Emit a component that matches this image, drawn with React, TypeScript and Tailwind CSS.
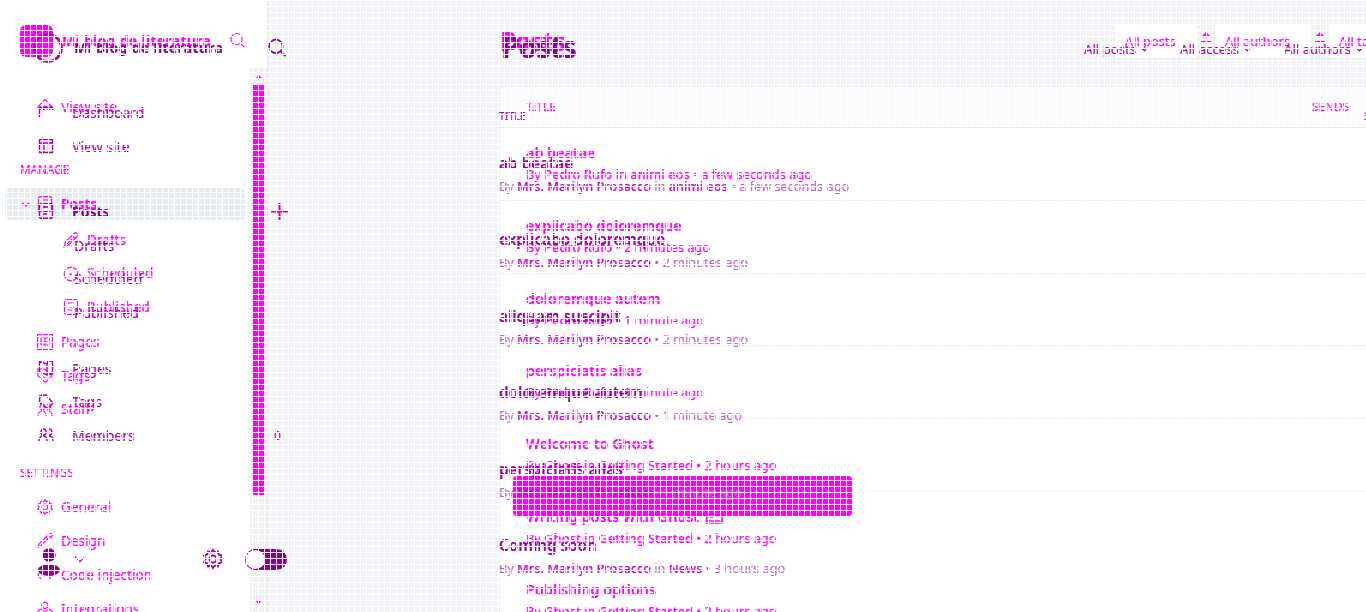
import type { ReactNode } from "react";

type IconName =
  | "home" | "dash" | "layout" | "doc" | "pen" | "clock" | "page" | "tag" | "label" | "users"
  | "gear" | "tool" | "code" | "nodes" | "search" | "chevron" | "plus" | "book";

const paths: Record<IconName, ReactNode> = {
  home: <path d="M.5 8.500 8 .5l7.500 8M3.500 7v4M6 11V9c0-2.500 4-2.500 4 0v2M13 7v4" />,
  dash: <path d="M1.500 13V3.500h13V6M6 3.500V6M10.500 3.500V6" />,
  layout: <path d="M1.500 1.500h13v13h-13zM1.500 5h13M6 5.500v9M10.500 5.500v9" />,
  doc: <path d="M3 .7h10a1.500 1.500 0 0 1 1.500 1.500v11.600a1.500 1.500 0 0 1-1.500 1.500H3a1.500 1.500 0 0 1-1.500-1.500V2.200A1.500 1.500 0 0 1 3 .7zM5 4h6M6 8h5M5 11h4" />,
  pen: <path d="M1 15l1.500-5L11 1.500a2 2 0 0 1 3 3L5.500 13zM9 3.500l3 3M4 12l6-6" />,
  clock: <><circle cx="8" cy="8" r="6.800" /><path d="M6.500 7.500l1.500 1 1.500-1" /></>,
  page: <path d="M.6 .6h14.800v14.800H.6zM4 4h8M4 8h8M4 11h8M4 4v7M8 4v7M12 4v7" />,
  tag: <path d="M1 1h7l7 7-6.500 6.500L1 8zM4 4.500h1M5 8l4 3" />,
  label: <path d="M2 1.500 8 1l7 8-5 5.500L5 12 1.500 8zM4 4h1" />,
  users: <path d="M1 14c0-4 2-5 4.500-5S9 11 9 14M11 9c3 0 4 2 4 5M8 5a2.500 3 0 1 1-5 0 2.500 3 0 0 1 5 0zM10 2.500a2.500 3 0 1 1 0 5" />,
  gear: (
    <>
      <circle cx="8" cy="8" r="2.800" />
      <path d="M8 .7l1.500 2 2.400-.8.700 2.500 2.500.9L14 8l1.200 2.600-2.500.9-.8 2.500-2.400-.8-1.500 2-1.500-2-2.400.8-.8-2.500-2.500-.9L2 8 .8 5.300l2.500-.9.800-2.500 2.400.8z" />
    </>
  ),
  tool: <path d="M1 15l1-4 8-8M3.500 13l8-8M9 4l3 3M11 2l3-1.500L15.500 2 14 5z" />,
  code: <path d="M4 4 1 8l3 4M12 4l3 4-3 4" />,
  nodes: <path d="M8 1l3 2v3L8 8 5 6V3zM4 8l3 2v3l-3 2-3-2v-3zM12 8l3 2v3l-3 2-3-2v-3z" />,
  search: <path d="M13 6.500a6 6 0 1 1-12 0 6 6 0 0 1 12 0zM11.500 11.500l4 3.800" />,
  chevron: <path d="M2 5l6 6 6-6" />,
  plus: <path d="M8 0v16M0 8h16" />,
  book: <path d="M1.500 1.500 9 4v11L1.500 12zM9 4l1-3h4.500v13H9" />,
};

function Icon({ name, className, width = 1.2 }: { name: IconName; className: string; width?: number }) {
  return (
    <svg viewBox="0 0 16 16" className={`shrink-0 overflow-visible ${className}`} fill="none" stroke="currentColor" strokeWidth={width}>
      {paths[name]}
    </svg>
  );
}

type Nav = { label: string; row: string; icon?: IconName; text?: string; head?: boolean; extra?: ReactNode };

const oldNav: Nav[] = [
  { label: "View site", row: "h-[34px] pl-[37px]", icon: "home" },
  { label: "MANAGE", row: "mt-[29px] h-[34px] pl-5", head: true },
  { label: "Posts", row: "h-[34px] pl-[37px]", icon: "doc" },
  { label: "Drafts", row: "mt-[2px] h-[34px] pl-[63px]", icon: "pen" },
  { label: "Scheduled", row: "h-[33px] pl-[63px]", icon: "clock" },
  { label: "Published", row: "h-[34px] pl-[63px]", icon: "doc" },
  { label: "Pages", row: "mt-px h-[34px] pl-[37px]", icon: "page" },
  { label: "Tags", row: "h-[34px] pl-[37px]", icon: "tag" },
  { label: "Staff", row: "h-[33px] pl-[37px]", icon: "users" },
  { label: "SETTINGS", row: "mt-[30px] h-[34px] pl-5", head: true },
  { label: "General", row: "h-[34px] pl-[37px]", icon: "gear" },
  { label: "Design", row: "h-[34px] pl-[37px]", icon: "tool" },
  { label: "Code injection", row: "h-[34px] pl-[37px]", icon: "code" },
  { label: "Integrations", row: "h-[34px] pl-[37px]", icon: "nodes" },
];

const newNav: Nav[] = [
  { label: "Dashboard", row: "h-[34px] pl-[38px]", icon: "dash" },
  { label: "View site", row: "h-[34px] pl-[38px]", icon: "layout" },
  { label: "Posts", row: "mt-[31px] h-[34px] pl-[38px]", icon: "doc", text: "font-bold text-[#80008a]", extra: <Icon name="plus" className="size-[17px] text-[#c800c8]" width={1.9} /> },
  { label: "Drafts", row: "mt-px h-[33px] pl-[74px]" },
  { label: "Scheduled", row: "h-[33px] pl-[74px]" },
  { label: "Published", row: "h-[34px] pl-[74px]" },
  { label: "Pages", row: "mt-[22px] h-[34px] pl-[38px]", icon: "book" },
  { label: "Tags", row: "h-[33px] pl-[38px]", icon: "label" },
  { label: "Members", row: "h-[34px] pl-[38px]", icon: "users", extra: <span className="pt-px pl-[3px] text-xs">0</span> },
];

const oldPosts = [
  ["ab beatae", "Pedro Rufo", "animi eos", "a few seconds ago"],
  ["explicabo doloremque", "Pedro Rufo", "", "2 minutes ago"],
  ["doloremque autem", "Pedro Rufo", "", "1 minute ago"],
  ["perspiciatis alias", "Pedro Rufo", "", "1 minute ago"],
  ["Welcome to Ghost", "Ghost", "Getting Started", "2 hours ago"],
  ["Writing posts with Ghost", "Ghost", "Getting Started", "2 hours ago"],
  ["Publishing options", "Ghost", "Getting Started", "2 hours ago"],
];

const newPosts = [
  ["ab beatae", "animi eos", "a few seconds ago"],
  ["explicabo doloremque", "", "2 minutes ago"],
  ["aliquam suscipit", "", "2 minutes ago"],
  ["doloremque autem", "", "1 minute ago"],
  ["perspiciatis alias", "", "1 minute ago"],
  ["Coming soon", "News", "3 hours ago"],
];

function Scrollbar() {
  return (
    <div className="mt-[68px] flex w-[17px] flex-col items-center bg-[#f1f1f1]">
      <svg className="mt-[7px] h-[3px] w-[6px]" viewBox="0 0 6 3"><path d="M0 3 3 0l3 3z" fill="#f0f" /></svg>
      <div className="mt-[7px] h-[410px] w-[11px] bg-[#ff00ff]" />
      <svg className="mt-[106px] h-[3px] w-[7px]" viewBox="0 0 6 3"><path d="M0 0h6L3 3z" fill="#f0f" /></svg>
    </div>
  );
}

function OldPage() {
  return (
    <div className="col-start-1 row-start-1 flex h-[612px] min-w-0 overflow-hidden text-[#ff00ff] [-webkit-text-stroke:0.25px_#ff00ff]">
      <aside className="h-full w-[250px] shrink-0 bg-white">
        <div className="flex h-[90px] items-start pt-[25px] pl-5">
          <div className="h-8 w-[33px] shrink-0 rounded-md bg-[#ff00ff]" />
          <div className="ml-[9px] h-8 w-[168px] text-[14px] leading-[32px] font-bold tracking-[0.3px] whitespace-nowrap">Mi blog de literatura</div>
          <Icon name="search" className="mt-2 size-[15px]" width={1.2} />
        </div>
        <nav>
          {oldNav.map((n) => (
            <div key={n.label} className={`flex items-center ${n.row}`}>
              {n.label === "Posts" ? (
                <div className="-ml-8 flex h-8 w-[240px] shrink-0 items-center rounded-[5px] bg-[#e6ebf0]">
                  <Icon name="chevron" className="ml-4 size-[9px]" width={2.4} />
                  <Icon name="doc" className="ml-[7px] size-4" width={1.2} />
                  <span className="ml-[8px] text-[13.5px] font-bold">Posts</span>
                </div>
              ) : (
                <>
                  {n.icon && <Icon name={n.icon} className="mr-[8px] size-4" width={1.2} />}
                  <span className={n.head ? "text-[11.700px]" : "text-[13.600px] whitespace-nowrap"}>{n.label}</span>
                </>
              )}
            </div>
          ))}
        </nav>
      </aside>
      <Scrollbar />
      <main className="min-w-0 flex-1 bg-[#f2f3f6] pl-[232px] shadow-[inset_1px_0_#e5e9ed]">
        <header className="flex h-[87px] justify-between">
          <h1 className="pt-[23px] pl-[1px] text-[26px] leading-9 font-bold tracking-[-1px]">Posts</h1>
          <div className="mt-6 mr-[-60px] flex h-[34px] text-[12.800px] shadow-xs">
            <Select label="All posts" width="w-[82px]" />
            <Stepper />
            <Select label="All authors" width="w-[96px]" />
            <Stepper />
            <Select label="All tags" width="w-[97px]" />
          </div>
        </header>
        <div className="h-[525px] overflow-hidden rounded-tl-md border-l border-[#e5eff5] bg-white">
          <div className="flex h-[41px] items-center justify-between border-b border-[#e5eaef] bg-[#fafbfd] pr-[17px] pl-[26px] text-[11.800px]">
            <span>TITLE</span><span>SENDS</span>
          </div>
          {oldPosts.map(([title, author, tag, when], i) => (
            <div key={i} className="h-[72.750px] border-b border-[#e5eff5] pt-[13px] pl-[26px] whitespace-nowrap">
              <div className="flex items-center gap-[6px] text-[14.350px] leading-[23px] font-semibold">
                {title}
                {i === 5 && <svg className="mt-px h-[14px] w-[18px]" viewBox="0 0 18 14" fill="none" stroke="currentColor" strokeWidth="1.600"><path d="M2 7l5-5h8l2 4v7H1zM1 11h16M5 7h3M11 6h3" /></svg>}
              </div>
              <div className="text-[12.850px] leading-5">
                By <span className="font-medium">{author}</span>{tag && <> in <span className="font-medium">{tag}</span></>} • {when}
              </div>
            </div>
          ))}
        </div>
      </main>
    </div>
  );
}

function Select({ label, width }: { label: string; width: string }) {
  return <div className={`flex items-center bg-white pt-px pl-[10px] whitespace-nowrap ${width}`}>{label}</div>;
}

function Stepper() {
  return (
    <div className="flex w-[18px] flex-col items-center bg-[#f1f1f1] pt-2">
      <svg className="h-1 w-2" viewBox="0 0 8 4"><path d="M0 4 4 0l4 4z" fill="#f0f" /></svg>
      <div className="mt-[5px] h-px w-[10px] bg-[#ff00ff]" />
    </div>
  );
}

function NewPage() {
  return (
    <div className="relative col-start-1 row-start-1 flex h-[612px] min-w-0 overflow-hidden text-[#a600b0] [-webkit-text-stroke:0.15px_currentColor]">
      <aside className="w-[300px] shrink-0">
        <div className="flex h-[95px] items-start pt-[33px] pl-[33px] text-[#8b0096]">
          <div className="size-[30px] shrink-0 rounded-full border-[3px] border-[#b000b4]" />
          <div className="ml-[11px] w-[194px] text-[14px] leading-[30px] font-bold tracking-[0.3px] whitespace-nowrap">Mi blog de literatura</div>
          <Icon name="search" className="mt-[6px] size-[18px]" width={1.5} />
        </div>
        <nav>
          {newNav.map((n) => (
            <div key={n.label} className={`flex items-center text-[14px] ${n.row}`}>
              {n.icon && <Icon name={n.icon} className="mr-[18px] size-4" width={1.4} />}
              <span className={n.text ?? ""}>{n.label}</span>
              {n.extra && <div className="mr-[13px] ml-auto flex w-4">{n.extra}</div>}
            </div>
          ))}
        </nav>
        <div className="mt-[87px] flex h-10 items-center pl-[38px]">
          <svg className="mt-[6px] h-[28px] w-[22px] shrink-0" viewBox="0 0 22 28" fill="#8b008f"><circle cx="11" cy="7" r="6.700" /><ellipse cx="11" cy="22" rx="11" ry="6" /></svg>
          <Icon name="chevron" className="ml-[13px] size-[14px]" width={1.4} />
          <Icon name="gear" className="ml-[116px] size-5" width={1.5} />
          <div className="ml-[22px] h-[21px] w-[42px] shrink-0 rounded-full bg-[#8b008f] p-px">
            <div className="size-[19px] rounded-full bg-white" />
          </div>
        </div>
      </aside>
      <main className="flex min-w-0 flex-1 flex-col pl-[200px]">
        <header className="flex h-[96px] justify-between">
          <h1 className="pt-[27px] pl-[1px] text-[30px] leading-10 font-bold tracking-[-1.200px] text-[#8b0096]">Posts</h1>
          <div className="mt-[35px] flex h-[30px] items-center text-[13.200px] whitespace-nowrap">
            <Filter label="All posts" width="w-[96px]" />
            <Filter label="All access" width="w-[104px]" />
            <Filter label="All authors" width="w-[82px]" />
          </div>
        </header>
        <div className="flex h-10 items-center justify-between pt-px text-[10.500px]">
          <span className="-ml-px">TITLE</span><span className="w-[2px] overflow-hidden">STATUS</span>
        </div>
        {newPosts.map(([title, tag, when]) => (
          <div key={title} className="-ml-px h-[76.400px] shrink-0 pt-[15px] whitespace-nowrap">
            <div className="text-[15.300px] leading-[25px] font-semibold text-[#9a00a0]">{title}</div>
            <div className="text-[12.750px] leading-[21px] text-[#c45fc8]">
              By <span className="font-medium text-[#c800d0]">Mrs. Marilyn Prosacco</span>
              {tag && <> in <span className="font-medium text-[#c800d0]">{tag}</span></>} • {when}
            </div>
          </div>
        ))}
      </main>
    </div>
  );
}

function Filter({ label, width }: { label: string; width: string }) {
  return (
    <div className={`flex shrink-0 items-center gap-[5px] ${width}`}>
      {label}<Icon name="chevron" className="size-[7px]" width={3} />
    </div>
  );
}

export default function App() {
  return (
    <div className="relative grid h-[612px] w-full grid-cols-1 overflow-hidden bg-white font-['Noto_Sans',sans-serif]">
      <OldPage />
      <div className="absolute top-[476px] left-[513px] h-10 w-[339px] rounded bg-[#ff00ff] shadow-sm" />
      <NewPage />
      <div className="pointer-events-none absolute inset-0 bg-[linear-gradient(to_right,#fff_1px,transparent_1px),linear-gradient(to_bottom,#fff_1px,transparent_1px)] bg-[size:6px_6px]" />
    </div>
  );
}
